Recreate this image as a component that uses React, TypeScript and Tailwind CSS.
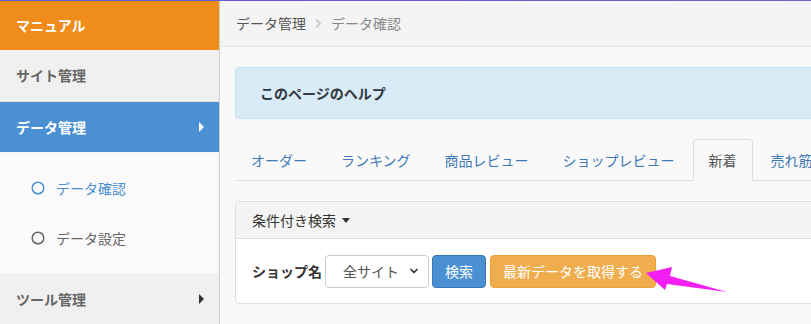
import React from "react";
import { ChevronRight, ChevronDown } from "lucide-react";

const font = { fontFamily: '"Noto Sans CJK JP", "Noto Sans", sans-serif' };

function RightTri({ color }: { color: string }) {
  return (
    <span
      className="inline-block w-0 h-0 border-y-[5px] border-y-transparent border-l-[5px]"
      style={{ borderLeftColor: color }}
    />
  );
}

function Ring({ color }: { color: string }) {
  return (
    <svg width="14" height="14" viewBox="0 0 14 14" className="shrink-0">
      <circle cx="7" cy="7" r="5.8" fill="none" stroke={color} strokeWidth="1.5" />
    </svg>
  );
}

export default function App() {
  const tabs = ["オーダー", "ランキング", "商品レビュー", "ショップレビュー", "新着", "売れ筋"];
  return (
    <div className="w-[811px] h-[324px] overflow-hidden flex flex-col text-[14px]" style={font}>
      <div className="h-px w-full bg-gradient-to-r from-[#5d5ad8] to-[#7a5cd4] shrink-0" />
      <div className="flex flex-1 min-h-0">
        {/* Sidebar */}
        <aside className="w-[220px] shrink-0 border-r border-[#cfcfcf] flex flex-col bg-[#f0f0f0]">
          <div className="h-[49px] bg-[#ef8c1a] text-white font-bold flex items-center pl-4">マニュアル</div>
          <div className="h-[52px] bg-[#f0f0f0] text-[#666] font-bold flex items-center pl-4 border-b border-[#e2e2e2]">
            サイト管理
          </div>
          <div className="h-[50px] bg-[#4a90d2] text-white font-bold flex items-center pl-4 pr-[15px] justify-between">
            <span>データ管理</span>
            <RightTri color="#ffffff" />
          </div>
          <div className="bg-[#fafafa] border-t border-[#f4f4f4] border-b border-[#dcdcdc] pt-[10px] pb-[10px] flex flex-col">
            <div className="h-[50px] flex items-center pl-[31px] gap-[11px] text-[#4a90d2]">
              <Ring color="#4a90d2" />
              <span>データ確認</span>
            </div>
            <div className="h-[50px] flex items-center pl-[31px] gap-[11px] text-[#666]">
              <Ring color="#666666" />
              <span>データ設定</span>
            </div>
          </div>
          <div className="h-[50px] bg-[#f0f0f0] text-[#666] font-bold flex items-center pl-4 pr-[15px] justify-between">
            <span>ツール管理</span>
            <RightTri color="#333333" />
          </div>
        </aside>

        {/* Main */}
        <main className="flex-1 min-w-0 bg-[#f9f9f9] overflow-hidden relative">
          <div className="h-[46px] bg-[#f4f4f4] border-b border-[#e2e2e2] flex items-center pl-4 gap-[6px]">
            <span className="text-[#555]">データ管理</span>
            <ChevronRight size={13} strokeWidth={3.5} color="#cccccc" />
            <span className="text-[#888]">データ確認</span>
          </div>
          <div className="pl-[15px] pt-5">
            <div className="h-[52px] mr-[-10px] bg-[#d9ebf7] border border-[#bfe3f1] rounded-[4px] flex items-center pl-[24px] font-bold text-[#31373f]">
              このページのヘルプ
            </div>

            <div className="mt-5 flex border-b border-[#dddddd] whitespace-nowrap h-[42px]">
              {tabs.map((t) => {
                const active = t === "新着";
                return (
                  <div
                    key={t}
                    className={
                      "h-[42px] -mb-px mr-[2px] px-[15px] flex items-center rounded-t-[4px] border " +
                      (active
                        ? "border-[#dddddd] border-b-[#f9f9f9] bg-[#f9f9f9] text-[#555]"
                        : "border-transparent text-[#3f78b5]")
                    }
                  >
                    {t}
                  </div>
                );
              })}
            </div>

            <div className="mt-5 mr-[-10px] border border-[#dddddd] rounded-[4px] bg-white">
              <div className="h-[37px] bg-[#f4f4f4] border-b border-[#dddddd] rounded-t-[4px] flex items-center pl-4 gap-[6px] text-[#333]">
                <span>条件付き検索</span>
                <span className="inline-block w-0 h-0 border-x-[4px] border-x-transparent border-t-[5px] border-t-[#333]" />
              </div>
              <div className="h-[64px] flex items-center pl-4">
                <span className="font-bold text-[#333] mr-[3px]">ショップ名</span>
                <div className="h-[33px] w-[104px] border border-[#cccccc] rounded-[4px] bg-white flex items-center pl-[17px] pr-[8px] justify-between text-[#555]">
                  <span>全サイト</span>
                  <ChevronDown size={12} strokeWidth={3.5} color="#333" />
                </div>
                <div className="ml-[3px] h-[33px] w-[54px] bg-[#4a90d2] border border-[#3a76b0] rounded-[4px] text-white flex items-center justify-center">
                  検索
                </div>
                <div className="ml-[4px] h-[33px] w-[166px] bg-[#f0ad4e] border border-[#eea236] rounded-[4px] text-white flex items-center justify-center">
                  最新データを取得する
                </div>
              </div>
            </div>
          </div>
          <svg
            className="absolute left-0 top-0 pointer-events-none"
            width="591"
            height="323"
            viewBox="220 1 591 323"
          >
            <polygon
              points="646,273 672,267 670,276 727,292 667,284 665,290"
              fill="#f21ef2"
            />
          </svg>
        </main>
      </div>
    </div>
  );
}
